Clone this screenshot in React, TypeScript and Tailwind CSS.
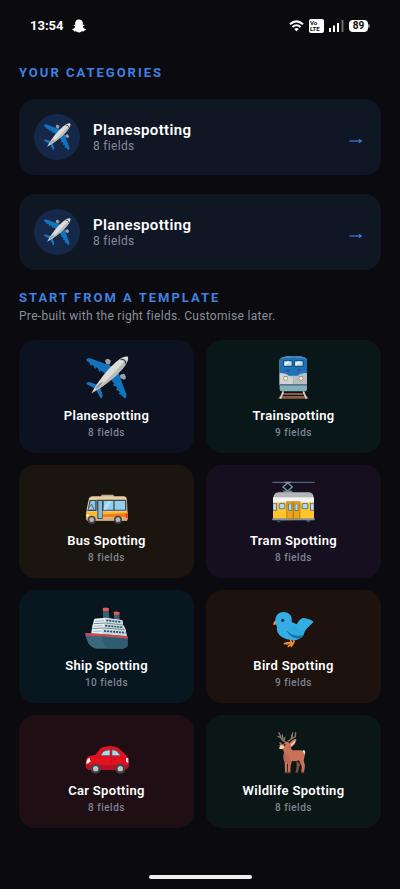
import type { ReactNode } from "react";
import { FaSnapchatGhost } from "react-icons/fa";

const PLANE_HALF = (
  <>
    <path d="M3 9 L12 6 L84 32 L64 56 L46 43 L44 47 L40 45 L39 38 L33 34 L31 38 L27 36 L26 30 L20 26 L18 30 L15 28 L14 22 L4 14 Z" fill="#1274bd" />
    <path d="M3 80 L12 78 L36 86 L30 98 L5 85 Z" fill="#1878bd" />
    <path d="M59 15 Q60 8 68 8 L76 13 Q78 20 72 26 L64 25 Z" fill="#9c9fa2" />
  </>
);

function Plane() {
  return (
    <>
      {PLANE_HALF}
      <g transform="matrix(0 -1 -1 0 130 130)">{PLANE_HALF}</g>
      <path d="M128 2 Q131 15 112 38 Q78 78 18 112 Q52 52 92 18 Q115 -1 128 2 Z" fill="#dcdcd9" />
      <path d="M129 8 Q125 22 108 42 Q74 80 18 112 Q70 72 112 22 Z" fill="#b9b9b8" />
      <path d="M30 96 Q38 84 53 76 Q50 88 34 98 Z" fill="#8b8c8e" />
      <path d="M106 11 Q119 7 122 24" fill="none" stroke="#35434d" strokeWidth="4" />
    </>
  );
}

function Train() {
  return (
    <>
      <path d="M31 111 H95 L98 117 H28 Z M22 120 H104 L109 128 H17 Z" fill="#8e5b42" />
      <path d="M33 106 L24 128 M93 106 L102 128" stroke="#d5d5d5" strokeWidth="5" />
      <path d="M22 12 Q24 4 38 2 Q63 -2 88 2 Q102 4 104 12 V100 Q104 106 98 106 H28 Q22 106 22 100 Z" fill="#86aebb" />
      <path d="M22 12 Q24 4 38 2 Q63 -2 88 2 Q102 4 104 12 V86 H22 Z" fill="#b6bdc0" />
      <path d="M22 50 L63 64 V86 H22 Z" fill="#d0d2d3" />
      <path d="M22 12 Q24 4 38 2 Q63 -2 88 2 Q102 4 104 12 V51 Q84 50 77 59 H49 Q42 50 22 51 Z" fill="#1e72b8" />
      <path d="M30 6 Q63 0 96 6" stroke="#4b93cc" strokeWidth="3" fill="none" />
      <path d="M22 84 H104 V89 H22 Z" fill="#54798a" />
      <rect x="32" y="13" width="29" height="19" rx="3" fill="#17476f" />
      <rect x="65" y="13" width="29" height="19" rx="3" fill="#17476f" />
      <path d="M35 16 H58 V29 H35 Z M68 16 H91 V29 H68 Z" fill="#b8dcf0" />
      <path d="M35 24 L45 16 H53 L38 29 M68 24 L78 16 H86 L71 29" fill="#e7f4fa" />
      <circle cx="47" cy="43" r="5" fill="#3b4f91" />
      <circle cx="79" cy="43" r="5" fill="#3b4f91" />
      <circle cx="40" cy="67" r="7" fill="#7b8588" />
      <circle cx="86" cy="67" r="7" fill="#7b8588" />
      <circle cx="40" cy="67" r="5" fill="#fff1bd" />
      <circle cx="86" cy="67" r="5" fill="#fff1bd" />
      <path d="M63 64 V84" stroke="#989fa2" strokeWidth="2" />
    </>
  );
}

function Bus() {
  return (
    <>
      <rect x="48" y="41" width="37" height="10" rx="2" fill="#c5aa83" />
      <path d="M11 52 Q14 45 25 46 H115 Q124 47 125 57 L127 112 Q127 117 122 118 H7 Q2 118 3 108 L4 84 Z" fill="#e6cda2" />
      <path d="M3 92 H126 L127 112 Q127 117 122 118 H7 Q2 118 3 108 Z" fill="#fdb92c" />
      <path d="M36 101 L126 96 V108 H36 Z" fill="#ef7d1d" />
      <path d="M3 110 H126 V119 H6 Q3 118 3 110 Z" fill="#cfb08a" />
      <path d="M13 57 H32 V90 H6 Z" fill="#31424c" />
      <path d="M16 60 H30 V86 H9 Z" fill="#8cc7e8" />
      <path d="M12 78 L19 70 L26 86" stroke="#31424c" strokeWidth="2" fill="none" />
      <path d="M33 56 H123 V89 H52 V114 H36 V89 H33 Z" fill="#394a55" />
      <rect x="39" y="60" width="11" height="51" fill="#82bde0" />
      <path d="M55 60 H84 V86 H55 Z M88 60 H119 V86 H88 Z" fill="#94cfed" />
      <path d="M67 60 H78 L63 86 H55 V80 Z" fill="#b4e0f5" />
      <rect x="3" y="99" width="8" height="8" rx="3" fill="#fff4d1" />
      <rect x="121" y="98" width="6" height="14" rx="2" fill="#ed3833" />
      <circle cx="19" cy="116" r="12" fill="#4b4547" />
      <circle cx="98" cy="116" r="12" fill="#4b4547" />
      <circle cx="19" cy="116" r="7" fill="#b6b7b9" />
      <circle cx="98" cy="116" r="7" fill="#b6b7b9" />
    </>
  );
}

function Tram() {
  return (
    <>
      <path d="M0 4 H127" stroke="#617985" strokeWidth="3" />
      <path d="M46 5 L60 18 L46 30 L32 18 Z M36 4 H56" fill="none" stroke="#7896a3" strokeWidth="4" />
      <path d="M33 29 H60 V36 H33 Z" fill="#6a8592" />
      <path d="M12 119 Q18 129 26 120 L30 112 H98 L102 120 Q110 129 116 116" fill="#3b5561" />
      <path d="M3 50 Q5 35 18 34 H110 Q123 35 124 50 V66 H3 Z" fill="#b4b5b7" />
      <rect x="2" y="49" width="123" height="17" fill="#f2f2f2" />
      <rect x="2" y="64" width="123" height="50" fill="#ffc62c" />
      <path d="M0 112 H127 V118 H0 Z" fill="#80919a" />
      <path d="M2 66 H14 V89 H2 Z M113 66 H125 V89 H113 Z" fill="#607d8b" />
      <path d="M3 68 H11 V86 H3 Z M116 68 H124 V86 H116 Z" fill="#b7dcf0" />
      <rect x="19" y="66" width="20" height="19" rx="6" fill="#607d8b" />
      <rect x="88" y="66" width="20" height="19" rx="6" fill="#607d8b" />
      <rect x="22" y="69" width="14" height="13" rx="4" fill="#afd9ef" />
      <rect x="91" y="69" width="14" height="13" rx="4" fill="#afd9ef" />
      <rect x="42" y="61" width="42" height="52" fill="#bd7c17" />
      <path d="M45 64 H61 V111 H45 Z M65 64 H81 V111 H65 Z" fill="#e9a51c" />
      <path d="M48 68 H59 V89 H48 Z M67 68 H78 V89 H67 Z" fill="#536975" />
      <path d="M50 70 H57 V87 H50 Z M69 70 H76 V87 H69 Z" fill="#afd9ef" />
    </>
  );
}

function Ship() {
  return (
    <>
      <path d="M53 13 H70 L72 38 H53 Z M86 24 H102 L103 42 H86 Z" fill="#3b6171" />
      <path d="M52 6 Q61 2 71 7 L70 15 H53 Z M85 18 Q93 14 103 19 L102 26 H86 Z" fill="#ed5556" />
      <path d="M27 38 L62 35 L111 43 L113 57 L121 70 L124 91 L17 86 L21 60 Z" fill="#e8f2f5" />
      <path d="M60 36 L111 43 L113 57 L60 52 Z M56 53 L117 59 V72 L56 67 Z M50 69 L121 71 L124 91 L50 86 Z" fill="#c4d9e1" />
      <path d="M25 53 L60 51 L113 57 M21 68 L57 66 L119 71" stroke="#78909c" strokeWidth="3" fill="none" />
      <path d="M63 43 L108 48 M60 59 L112 64 M56 75 L120 80" stroke="#344a55" strokeWidth="5" strokeDasharray="6 3" />
      <path d="M30 46 L57 44 M26 61 L52 59 M23 76 L48 75" stroke="#9db6c1" strokeWidth="3" />
      <path d="M0 81 L49 84 L127 91 V120 Q122 127 112 128 H34 Q19 127 9 112 Q1 98 0 81 Z" fill="#39677b" />
      <path d="M0 81 L49 84 L127 91 V98 L48 91 L1 89 Z" fill="#cf4950" />
      <path d="M49 91 L126 98 V120 Q122 127 112 128 H72 Q53 116 49 91 Z" fill="#315c70" />
    </>
  );
}

function Bird() {
  return (
    <>
      <path d="M54 98 L57 110 Q48 108 36 113 M57 110 L43 114 M62 98 Q68 106 61 114 Q54 115 48 121 M62 113 L57 121" fill="none" stroke="#ef8b37" strokeWidth="5" strokeLinecap="round" />
      <path d="M12 42 Q3 46 2 56 Q9 57 15 55 Z" fill="#f58f3c" />
      <path d="M9 43 C9 27 20 18 34 18 C51 18 61 31 58 48 L73 55 Q81 39 91 36 Q107 36 124 47 L103 68 Q94 77 94 88 Q78 107 57 101 C29 100 10 83 14 62 Q9 55 9 43 Z" fill="#34ade5" />
      <path d="M44 76 C51 90 67 99 82 97 L96 84 C78 94 57 88 46 75 Z" fill="#176f9f" />
      <path d="M48 68 C59 54 72 57 84 72 L98 72 Q97 81 90 86 Q61 94 48 68 Z" fill="#2fa9e2" />
      <circle cx="31" cy="43" r="5" fill="#17384b" />
    </>
  );
}

function Car() {
  return (
    <>
      <path d="M39 60 Q47 47 68 46 H79 Q96 47 106 57 L121 71 Q132 81 130 106 Q127 116 114 117 H14 Q1 116 1 105 Q0 82 8 77 Q20 73 31 71 Z" fill="#e31220" />
      <path d="M3 103 H130 Q128 115 116 117 H12 Q4 115 3 103 Z" fill="#b71024" />
      <path d="M44 75 L51 61 Q58 55 75 55 V75 Z M79 55 Q95 55 101 64 L108 75 H79 Z" fill="#82454c" />
      <path d="M48 73 L54 63 Q61 58 73 58 V73 Z M81 58 Q93 58 98 66 L104 73 H81 Z" fill="#a6daf0" />
      <path d="M77 54 V104 M109 78 Q119 95 112 107" stroke="#bc0c1e" strokeWidth="2" fill="none" />
      <path d="M83 84 H92" stroke="#8f1824" strokeWidth="3" />
      <path d="M12 80 L16 91 Q11 98 3 98 Q3 85 12 80 Z" fill="#f5f3eb" />
      <path d="M122 82 L129 80 V96 L122 92 Z" fill="#e8dbe0" />
      <path d="M36 76 Q40 72 45 77 L41 82 Z" fill="#ca1022" />
      <circle cx="31" cy="113" r="15" fill="#444348" />
      <circle cx="105" cy="113" r="15" fill="#444348" />
      <circle cx="31" cy="113" r="8" fill="#bfc1c2" />
      <circle cx="105" cy="113" r="8" fill="#bfc1c2" />
    </>
  );
}

function Deer() {
  return (
    <>
      <path d="M39 32 Q27 29 25 17 L20 5 M27 21 L17 16 M32 26 L30 12 M47 30 Q59 26 58 13 M55 25 L69 17 L70 5 M58 23 L61 6 M34 28 L38 20" fill="none" stroke="#8e7668" strokeWidth="4" strokeLinecap="round" />
      <path d="M72 90 L73 108 L70 124 H77 L83 98 Z" fill="#884e40" />
      <path d="M32 42 L23 33 Q20 32 22 39 Q26 47 35 47 M50 38 Q59 24 72 23 Q73 39 54 50 Z" fill="#c4745c" />
      <path d="M54 41 L69 27 Q69 39 56 46 Z" fill="#efd4bb" />
      <path d="M33 39 Q42 26 54 39 L57 53 Q58 59 67 58 H84 Q94 58 98 70 L94 88 L98 104 L95 124 H87 L88 106 L80 88 Q69 92 59 90 L55 104 L54 125 H47 V101 L44 97 L45 125 H38 L37 94 Q31 83 35 64 Q34 57 29 54 L22 50 Q23 42 33 39 Z" fill="#c87259" />
      <path d="M36 62 Q47 69 53 86 L57 91 L55 99 L44 96 L37 94 Q31 83 35 64 Z" fill="#a85944" opacity=".4" />
      <path d="M33 44 Q24 41 19 46 L21 53 Q29 57 36 49 Z" fill="#efd6bd" />
      <circle cx="20" cy="47" r="3" fill="#33292b" />
      <circle cx="37" cy="41" r="3" fill="#342c2e" />
      <path d="M91 61 Q94 54 98 60 Q100 67 97 71 Z" fill="#ead3c1" />
      <path d="M38 122 H45 V127 H36 Z M47 122 H54 V127 H46 Z M70 121 H77 L75 126 H69 Z M88 122 H96 V127 H87 Z" fill="#66433b" />
    </>
  );
}

function Emoji({ children, className }: { children: ReactNode; className: string }) {
  return (
    <svg viewBox="-1 0 132 132" className={className} aria-hidden="true">
      {children}
    </svg>
  );
}

const CATEGORIES = [
  { id: 1, name: "Planespotting", fields: 8 },
  { id: 2, name: "Planespotting", fields: 8 },
];

const TEMPLATES = [
  { name: "Planespotting", fields: 8, bg: "bg-[#0c121f]", icon: <Plane /> },
  { name: "Trainspotting", fields: 9, bg: "bg-[#0a1718]", icon: <Train /> },
  { name: "Bus Spotting", fields: 8, bg: "bg-[#1b1510]", icon: <Bus /> },
  { name: "Tram Spotting", fields: 8, bg: "bg-[#150f20]", icon: <Tram /> },
  { name: "Ship Spotting", fields: 10, bg: "bg-[#08161f]", icon: <Ship /> },
  { name: "Bird Spotting", fields: 9, bg: "bg-[#1e120f]", icon: <Bird /> },
  { name: "Car Spotting", fields: 8, bg: "bg-[#1f0e13]", icon: <Car /> },
  { name: "Wildlife Spotting", fields: 8, bg: "bg-[#0b1716]", icon: <Deer /> },
];

function StatusBar() {
  return (
    <header className="flex h-[52px] items-center justify-between px-[30px] text-white">
      <div className="flex items-center gap-2">
        <span className="text-[13px] font-bold">13:54</span>
        <FaSnapchatGhost className="size-[14px]" />
      </div>
      <div className="flex items-center gap-[5px]">
        <svg viewBox="0 0 15 12" className="h-3 w-[15px]" fill="none" stroke="currentColor" strokeWidth="2">
          <path d="M1 4.2 Q7.5 -1.5 14 4.2 M3.5 7 Q7.5 3.5 11.5 7" />
          <path d="M5.2 9 Q7.5 7.2 9.8 9 L7.5 11.500 Z" fill="currentColor" stroke="none" />
        </svg>
        <span className="flex h-[14px] w-[15px] flex-col justify-center rounded-[2px] bg-white pl-px text-[6px] leading-[6px] font-bold text-[#0a0a0f]">
          <span>Vo</span>
          <span>LTE</span>
        </span>
        <svg viewBox="0 0 15 12" className="h-3 w-[15px]" fill="currentColor">
          <path d="M0 8 h2 v4 h-2 z M4 5.5 h2 v6.5 h-2 z M8 3 h2 v9 h-2 z" />
          <path d="M12.5 0 h2 v12 h-2 z" opacity=".4" />
        </svg>
        <span className="flex items-center">
          <span className="flex h-3 w-[19px] items-center justify-center rounded-[4px] bg-white text-[10px] leading-3 font-bold text-[#0a0a0f]">
            89
          </span>
          <span className="h-1 w-[2px] rounded-r-full bg-white/50" />
        </span>
      </div>
    </header>
  );
}

export default function App() {
  return (
    <div className="flex min-h-screen flex-col bg-[#0a0a0f] font-[Roboto,sans-serif]">
      <StatusBar />

      <main className="px-[19px]">
        <section>
          <h2 className="mt-[13px] text-[13px] leading-4 font-bold tracking-[2px] text-[#4080e0]">
            YOUR CATEGORIES
          </h2>
          <div className="mt-[18px] flex flex-col gap-[19px]">
            {CATEGORIES.map((cat) => (
              <button
                key={cat.id}
                type="button"
                className="flex h-[76px] w-full items-center rounded-2xl bg-[#0f1624] pr-[18px] pl-[15px] text-left"
              >
                <span className="flex size-[46px] items-center justify-center rounded-full bg-[#152849]">
                  <Emoji className="size-7">
                    <Plane />
                  </Emoji>
                </span>
                <span className="ml-[13px] flex flex-1 flex-col">
                  <span className="text-[15px] leading-[18px] font-semibold tracking-wide text-white">
                    {cat.name}
                  </span>
                  <span className="text-xs leading-[14px] tracking-wide text-[#848c9c]">
                    {cat.fields} fields
                  </span>
                </span>
                <svg viewBox="0 0 14 8" className="mt-2 h-2 w-[14px] text-[#3f7fe2]" aria-hidden="true">
                  <path d="M0.5 4 H12" stroke="currentColor" strokeWidth="1.2" />
                  <path d="M9.5 1.5 L13.5 4 L9.5 6.5 L10.5 4 Z" fill="currentColor" />
                </svg>
              </button>
            ))}
          </div>
        </section>

        <section>
          <h2 className="mt-5 text-[13px] leading-4 font-bold tracking-[2px] text-[#4080e0]">
            START FROM A TEMPLATE
          </h2>
          <p className="mt-[2px] text-xs leading-4 tracking-wide text-[#8b8f99]">
            Pre-built with the right fields. Customise later.
          </p>
          <div className="mt-4 grid grid-cols-2 gap-3">
            {TEMPLATES.map((tpl) => (
              <button
                key={tpl.name}
                type="button"
                className={`flex h-[113px] flex-col items-center rounded-2xl pt-4 ${tpl.bg}`}
              >
                <Emoji className="size-11">{tpl.icon}</Emoji>
                <span className="mt-2 text-[13px] leading-4 font-semibold tracking-wide text-white">
                  {tpl.name}
                </span>
                <span className="mt-px text-[10px] leading-4 font-medium tracking-wider text-[#7d8492]">
                  {tpl.fields} fields
                </span>
              </button>
            ))}
          </div>
        </section>
      </main>

      <div className="mx-auto mt-auto mb-[10px] h-1 w-[103px] rounded-full bg-[#f0f0f0]" />
    </div>
  );
}
